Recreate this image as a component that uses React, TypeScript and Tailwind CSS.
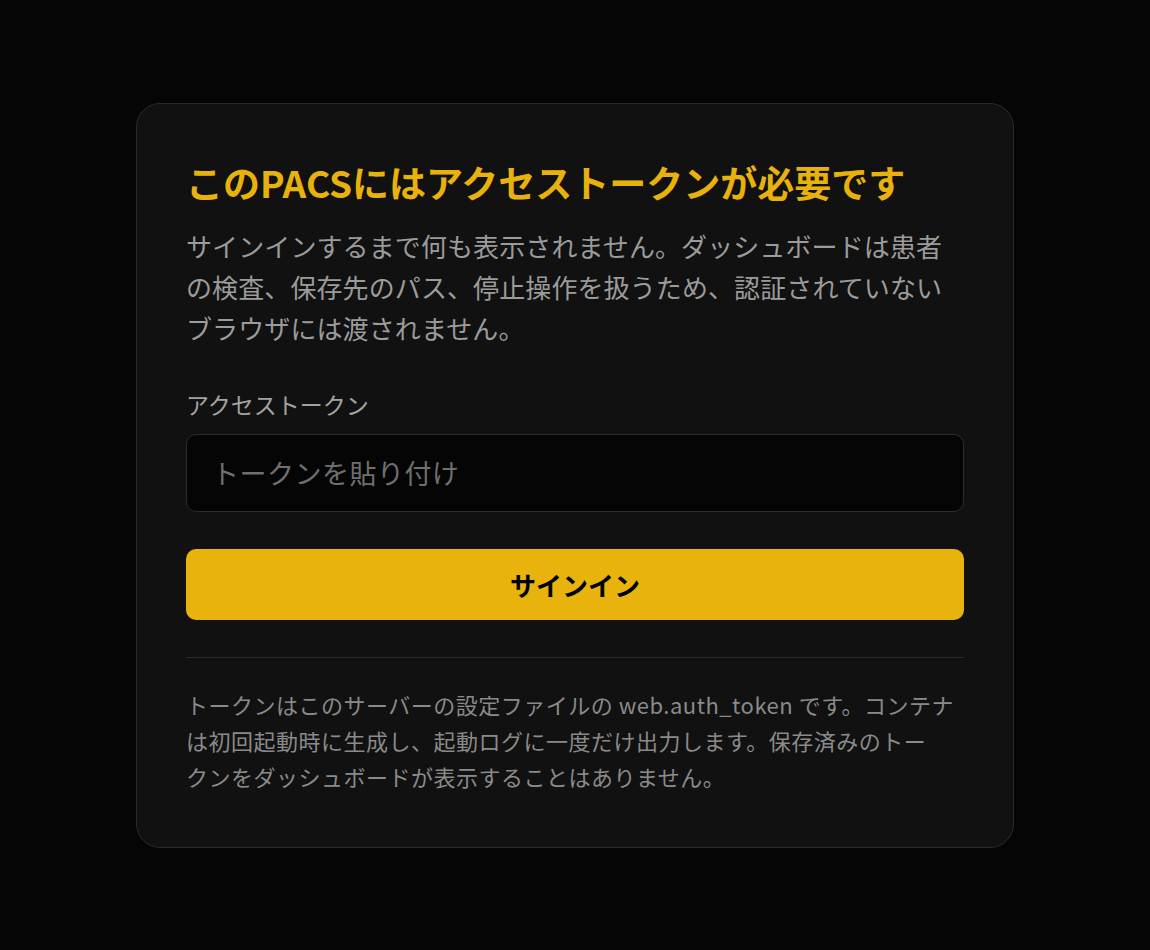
import React from "react";

export default function App() {
  return (
    <div
      className="min-h-screen w-full bg-[#050505] flex items-center justify-center"
      style={{ fontFamily: '"Noto Sans CJK JP", "Noto Sans", sans-serif' }}
    >
      <div className="w-[878px] rounded-[24px] border border-[#2a2a2a] bg-[#111111] px-[49px] pt-[55px] pb-[53px]">
        <h1 className="text-[37px] leading-[46px] font-bold text-[#e8b20c]">
          このPACSにはアクセストークンが必要です
        </h1>
        <p className="mt-[20px] text-[26px] leading-[41px] tracking-[0.1px] text-[#9b9b9b]">
          サインインするまで何も表示されません。ダッシュボードは患者の検査、保存先のパス、停止操作を扱うため、認証されていないブラウザには渡されません。
        </p>
        <label className="mt-[40px] block text-[23px] leading-[32px] text-[#a3a3a3]">
          アクセストークン
        </label>
        <input
          type="text"
          placeholder="トークンを貼り付け"
          className="mt-[14px] block h-[78px] w-full rounded-[10px] border border-[#2c2c2c] bg-[#050505] px-[25px] text-[27px] tracking-[0.5px] text-[#d0d0d0] outline-none placeholder:text-[#6f6f6f]"
        />
        <button
          type="button"
          className="mt-[37px] flex h-[71px] w-full items-center justify-center rounded-[10px] bg-[#e8b30c] text-[26px] font-bold text-black"
        >
          サインイン
        </button>
        <div className="mt-[37px] h-px w-full bg-[#2a2a2a]" />
        <p className="mt-[28px] text-[22px] leading-[36px] tracking-[0.5px] text-[#8a8a8a]">
          <span className="block whitespace-nowrap">
            トークンはこのサーバーの設定ファイルの web.auth_token です。コンテナ
          </span>
          <span className="block whitespace-nowrap">
            は初回起動時に生成し、起動ログに一度だけ出力します。保存済みのトー
          </span>
          <span className="block whitespace-nowrap">
            クンをダッシュボードが表示することはありません。
          </span>
        </p>
      </div>
    </div>
  );
}
